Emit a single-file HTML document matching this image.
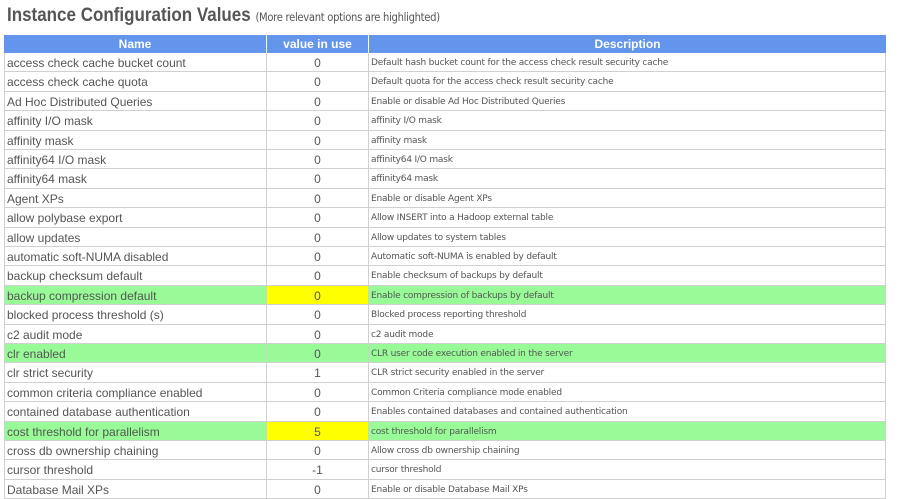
<!DOCTYPE html><html><head><meta charset="utf-8"><style>
body{margin:0;width:900px;height:491px;overflow:hidden;background:#fff;font-family:"Liberation Sans",sans-serif;color:#555;position:relative}
h1{position:absolute;left:7px;top:4px;margin:0;font-size:17px;font-weight:bold;color:#555;white-space:nowrap;font-family:"Liberation Sans",sans-serif;transform:scaleY(1.12);transform-origin:0 0}
h1 small{font-size:10px;font-weight:normal;font-family:"DejaVu Sans",sans-serif;letter-spacing:-0.3px}
.r{position:absolute;left:4px;width:882px;height:19.4px;box-sizing:border-box;border-bottom:1px solid #d0d0d0}
.r div{position:absolute;top:0;height:100%;box-sizing:border-box;border-left:1px solid #d0d0d0;line-height:20px;white-space:nowrap;overflow:hidden}
.a{left:0;width:262px;font-size:12px;padding-left:2px}
.b{left:262px;width:102px;text-align:center;font-size:12px}
.c{left:364px;width:518px;font-size:9px;padding-left:2px;border-right:1px solid #d0d0d0;font-family:"DejaVu Sans",sans-serif;letter-spacing:-0.2px}
.h{background:#6495ed;color:#fff;font-weight:bold;top:35px;height:18px;border:none}
.h div{border-left:1px solid #fff;text-align:center;font-size:12px;line-height:18px;padding:0;font-family:"Liberation Sans",sans-serif;letter-spacing:0}
.g{background:#98fb98}.g .b.y{background:#ffff00}
</style></head><body>
<h1>Instance Configuration Values <small>(More relevant options are highlighted)</small></h1>
<div class="r h"><div class="a" style="border-left:none">Name</div><div class="b">value in use</div><div class="c" style="border-right:none">Description</div></div>
<div class="r" style="top:53px"><div class="a">access check cache bucket count</div><div class="b">0</div><div class="c">Default hash bucket count for the access check result security cache</div></div>
<div class="r" style="top:72.4px"><div class="a">access check cache quota</div><div class="b">0</div><div class="c">Default quota for the access check result security cache</div></div>
<div class="r" style="top:91.8px"><div class="a">Ad Hoc Distributed Queries</div><div class="b">0</div><div class="c">Enable or disable Ad Hoc Distributed Queries</div></div>
<div class="r" style="top:111.2px"><div class="a">affinity I/O mask</div><div class="b">0</div><div class="c">affinity I/O mask</div></div>
<div class="r" style="top:130.6px"><div class="a">affinity mask</div><div class="b">0</div><div class="c">affinity mask</div></div>
<div class="r" style="top:150px"><div class="a">affinity64 I/O mask</div><div class="b">0</div><div class="c">affinity64 I/O mask</div></div>
<div class="r" style="top:169.4px"><div class="a">affinity64 mask</div><div class="b">0</div><div class="c">affinity64 mask</div></div>
<div class="r" style="top:188.8px"><div class="a">Agent XPs</div><div class="b">0</div><div class="c">Enable or disable Agent XPs</div></div>
<div class="r" style="top:208.2px"><div class="a">allow polybase export</div><div class="b">0</div><div class="c">Allow INSERT into a Hadoop external table</div></div>
<div class="r" style="top:227.6px"><div class="a">allow updates</div><div class="b">0</div><div class="c">Allow updates to system tables</div></div>
<div class="r" style="top:247px"><div class="a">automatic soft-NUMA disabled</div><div class="b">0</div><div class="c">Automatic soft-NUMA is enabled by default</div></div>
<div class="r" style="top:266.4px"><div class="a">backup checksum default</div><div class="b">0</div><div class="c">Enable checksum of backups by default</div></div>
<div class="r g" style="top:285.8px"><div class="a">backup compression default</div><div class="b y">0</div><div class="c">Enable compression of backups by default</div></div>
<div class="r" style="top:305.2px"><div class="a">blocked process threshold (s)</div><div class="b">0</div><div class="c">Blocked process reporting threshold</div></div>
<div class="r" style="top:324.6px"><div class="a">c2 audit mode</div><div class="b">0</div><div class="c">c2 audit mode</div></div>
<div class="r g" style="top:344px"><div class="a">clr enabled</div><div class="b">0</div><div class="c">CLR user code execution enabled in the server</div></div>
<div class="r" style="top:363.4px"><div class="a">clr strict security</div><div class="b">1</div><div class="c">CLR strict security enabled in the server</div></div>
<div class="r" style="top:382.8px"><div class="a">common criteria compliance enabled</div><div class="b">0</div><div class="c">Common Criteria compliance mode enabled</div></div>
<div class="r" style="top:402.2px"><div class="a">contained database authentication</div><div class="b">0</div><div class="c">Enables contained databases and contained authentication</div></div>
<div class="r g" style="top:421.6px"><div class="a">cost threshold for parallelism</div><div class="b y">5</div><div class="c">cost threshold for parallelism</div></div>
<div class="r" style="top:441px"><div class="a">cross db ownership chaining</div><div class="b">0</div><div class="c">Allow cross db ownership chaining</div></div>
<div class="r" style="top:460.4px"><div class="a">cursor threshold</div><div class="b">-1</div><div class="c">cursor threshold</div></div>
<div class="r" style="top:479.8px"><div class="a">Database Mail XPs</div><div class="b">0</div><div class="c">Enable or disable Database Mail XPs</div></div>
</body></html>
